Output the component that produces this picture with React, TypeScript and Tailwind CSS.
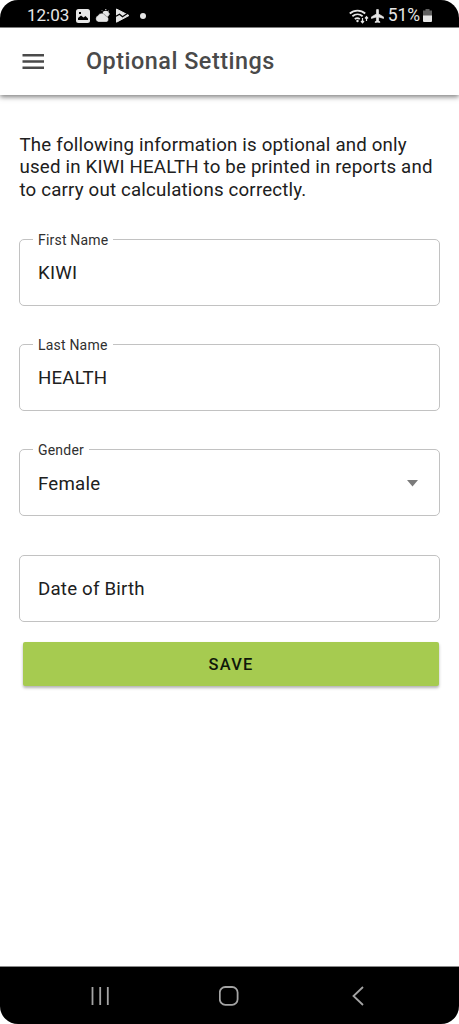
import React from 'react';

const StatusBar: React.FC = () => (
    <div className="h-[28px] shrink-0 bg-black border-b border-[#8a8a8a] rounded-t-[18px] flex items-center justify-between pl-[27px] pr-[27px] pt-1 text-[#e6e6e6]">
        <div className="flex items-center">
            <span className="w-[49px] text-[17px] leading-none whitespace-nowrap">12:03</span>
            {/* Gallery */}
            <svg className="w-[14px] h-[14px]" viewBox="0 0 14 14">
                <rect width="14" height="14" rx="2.5" fill="currentColor" />
                <path d="M2 11V9l3-2.5L7.5 8.5 9.5 7 12 9.5V11z" fill="#000" />
                <rect x="3" y="3" width="2" height="2" fill="#000" />
            </svg>
            {/* Weather */}
            <svg className="w-[15px] h-[14px] ml-[5px]" viewBox="0 0 15 14">
                <circle cx="10.8" cy="5" r="3.2" fill="currentColor" />
                <path d="M10.8 0v1M14 1.5l-.7.7M7 1.5l.7.7M15 5h-1" stroke="currentColor" />
                <path d="M3.5 13A3.3 3.3 0 0 1 3 6.600A4.200 4.200 0 0 1 10.700 7a3.100 3.100 0 0 1 .8 6z" fill="currentColor" stroke="#000" strokeWidth=".3" />
            </svg>
            {/* Play */}
            <svg className="w-[15px] h-[15px] ml-[5px]" viewBox="0 0 15 15">
                <path d="M1.5 1l12.500 6.500L1.500 14.200z" fill="currentColor" stroke="currentColor" strokeLinejoin="round" />
                <path d="M1 8.200l3.500-2 3 2.500L12 5.800" fill="none" stroke="#000" strokeWidth="1.300" />
            </svg>
            <span className="w-[6px] h-[6px] ml-[10px] rounded-full bg-current" />
        </div>
        <div className="flex items-center">
            {/* Wi-Fi */}
            <svg className="w-[20px] h-[16px]" viewBox="0 0 20 16" fill="none" stroke="currentColor" strokeWidth="1.8">
                <path d="M.8 5.5a11.500 11.500 0 0 1 15.400 0M3.400 8.300a8 8 0 0 1 10.200 0M5.800 11a4.300 4.300 0 0 1 5 0" />
                <circle cx="8.500" cy="13" r="1.2" fill="currentColor" stroke="none" />
                <path d="M13.5 10v4.500M12 13l1.500 1.800L15 13M17.500 13V9M16 10.500l1.500-1.800 1.500 1.800" strokeWidth="1.2" />
            </svg>
            {/* Airplane mode */}
            <svg className="w-[13px] h-[14px] ml-[2px]" viewBox="2 2 19 20" fill="currentColor" stroke="currentColor" strokeWidth="1">
                <path d="M20.500 15.500v-2L13 9V3.500a1.500 1.500 0 0 0-3 0V9l-7.500 4.500v2L10 13.500V19l-2 1.500v1l3.500-.5 3.500.5v-1L13 19v-5.500z" />
            </svg>
            <span className="ml-[4px] mt-px text-[17.5px] leading-none tracking-[-0.1px]">51%</span>
            <svg className="w-[9px] h-[13px] ml-[3px]" viewBox="0 0 9 13">
                <path d="M2.500 0h4v1.500H9V7H0V1.500h2.500z" fill="#606060" />
                <path d="M0 6.500h9V12a1 1 0 0 1-1 1H1a1 1 0 0 1-1-1z" fill="currentColor" />
            </svg>
        </div>
    </div>
);

interface FieldProps {
    label?: string;
    value: string;
    select?: boolean;
}

const Field: React.FC<FieldProps> = ({ label, value, select }) => (
    <div className="relative h-[67px] mb-[38.3px] pl-[18px] pr-[21px] pt-[1.5px] border border-[#c2c2c2] rounded-[5px] flex items-center justify-between">
        {label && (
            <span className="absolute left-[13px] top-[-8px] px-[5px] bg-white text-[14px] leading-[17px] tracking-[0.2px] text-[#303030]">
                {label}
            </span>
        )}
        <span className="text-[18.7px] tracking-[0.2px] text-[#202020]">{value}</span>
        {select && (
            <svg className="w-[11px] h-[7px]" viewBox="0 0 11 7">
                <path d="M0 0h11L5.5 6.500z" fill="#7b7b7b" />
            </svg>
        )}
    </div>
);

const NavigationBar: React.FC = () => (
    <div className="h-[58px] shrink-0 bg-black border-t border-[#8a8a8a] rounded-b-[18px] flex items-center pl-[90px] text-[#a4a4a4]">
        <svg className="w-[20px] h-[20px]" viewBox="0 0 20 20" stroke="currentColor" strokeWidth="1.8">
            <path d="M2.500 1v18M10.200 1v18M17.800 1v18" />
        </svg>
        <svg className="w-[20px] h-[20px] ml-[109px]" viewBox="0 0 20 20" fill="none" stroke="currentColor" strokeWidth="1.8">
            <rect x="0.8" y="1" width="17.800" height="17.800" rx="5.500" />
        </svg>
        <svg className="w-[13px] h-[20px] ml-[112px]" viewBox="0 0 13 20" fill="none" stroke="currentColor" strokeWidth="1.8">
            <path d="M12 1L2.500 10l9.500 9" />
        </svg>
    </div>
);

export default function App() {
    return (
        <div className="w-full h-screen bg-white flex flex-col overflow-hidden font-[Roboto,sans-serif]">
            <StatusBar />

            {/* App bar */}
            <header className="h-[67px] shrink-0 flex items-center pl-[22px] shadow-[0_2px_5px_rgba(0,0,0,0.5)]">
                <button aria-label="Menu">
                    <svg className="w-[22px] h-[15px] block" viewBox="0 0 22 15" fill="none" stroke="#4a4a4a" strokeWidth="2.4">
                        <path d="M.5 1.200H22M.5 7.500H22M.5 13.800H22" />
                    </svg>
                </button>
                <h1 className="ml-[42px] text-[23.4px] font-medium tracking-[0.5px] text-[#4a4a4a]">Optional Settings</h1>
            </header>

            <main className="flex-1 px-[19px] pt-[38.5px]">
                <p className="mb-[37.5px] pl-[0.5px] text-[18.7px] leading-[22.6px] tracking-[0.18px] text-[#202020] whitespace-nowrap">
                    The following information is optional and only<br />
                    used in KIWI HEALTH to be printed in reports and<br />
                    to carry out calculations correctly.
                </p>

                <Field label="First Name" value="KIWI" />
                <Field label="Last Name" value="HEALTH" />
                <Field label="Gender" value="Female" select />
                <Field value="Date of Birth" />

                <button className="block ml-[4px] mt-[-17.5px] w-[416px] h-[44px] pt-px rounded-[2px] bg-[#a6cb50] text-[16.4px] font-medium tracking-[1.3px] text-[#10180a] shadow-[0_2px_3px_rgba(0,0,0,0.3)]">
                    SAVE
                </button>
            </main>

            <NavigationBar />
        </div>
    );
}
